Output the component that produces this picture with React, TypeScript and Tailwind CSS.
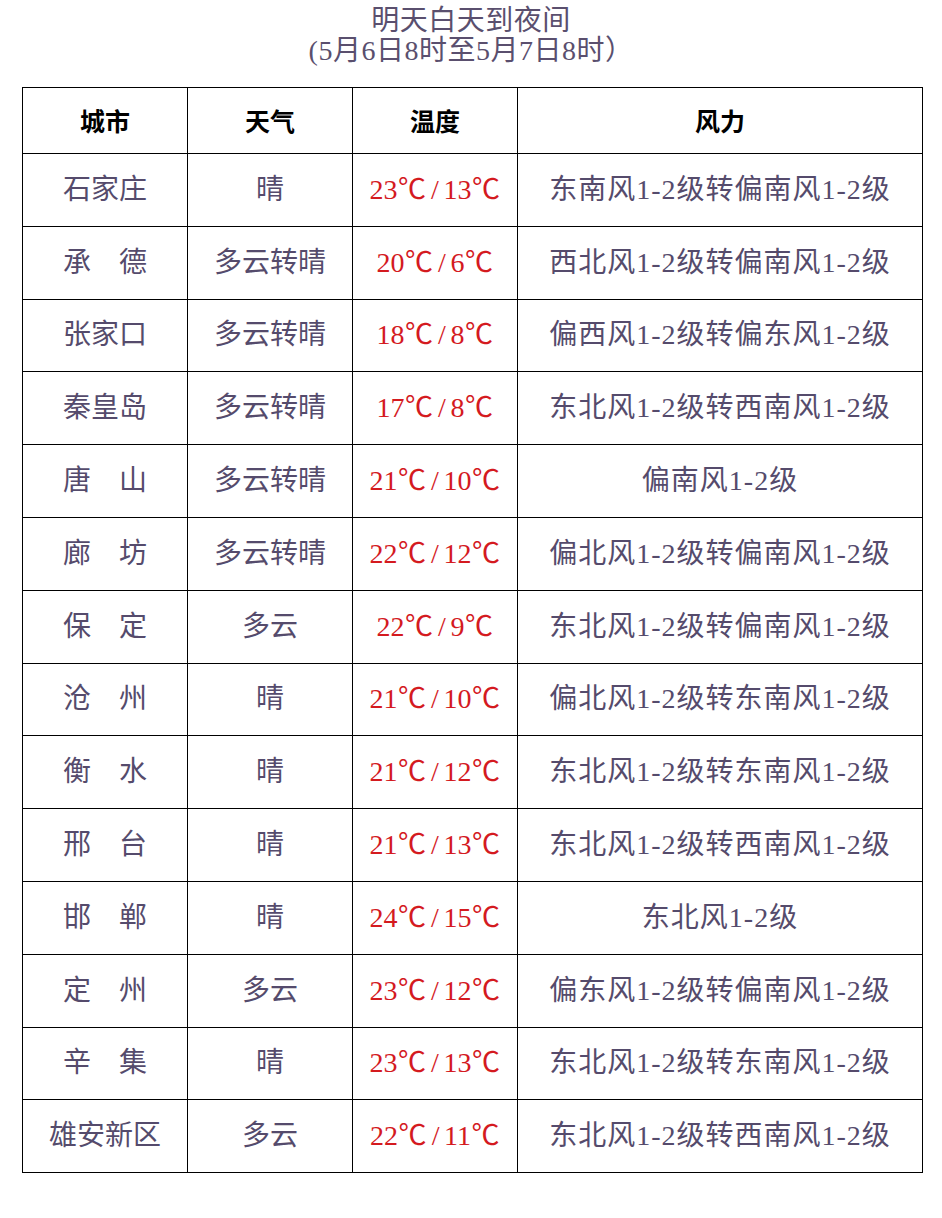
const rows: [string, string, string, string][] = [
  ["石家庄", "晴", "23/13", "东南风1-2级转偏南风1-2级"],
  ["承　德", "多云转晴", "20/6", "西北风1-2级转偏南风1-2级"],
  ["张家口", "多云转晴", "18/8", "偏西风1-2级转偏东风1-2级"],
  ["秦皇岛", "多云转晴", "17/8", "东北风1-2级转西南风1-2级"],
  ["唐　山", "多云转晴", "21/10", "偏南风1-2级"],
  ["廊　坊", "多云转晴", "22/12", "偏北风1-2级转偏南风1-2级"],
  ["保　定", "多云", "22/9", "东北风1-2级转偏南风1-2级"],
  ["沧　州", "晴", "21/10", "偏北风1-2级转东南风1-2级"],
  ["衡　水", "晴", "21/12", "东北风1-2级转东南风1-2级"],
  ["邢　台", "晴", "21/13", "东北风1-2级转西南风1-2级"],
  ["邯　郸", "晴", "24/15", "东北风1-2级"],
  ["定　州", "多云", "23/12", "偏东风1-2级转偏南风1-2级"],
  ["辛　集", "晴", "23/13", "东北风1-2级转东南风1-2级"],
  ["雄安新区", "多云", "22/11", "东北风1-2级转西南风1-2级"],
];

const font = { fontFamily: '"Liberation Serif", "Noto Sans CJK SC", serif' };

function Temp({ value }: { value: string }) {
  const [hi, lo] = value.split("/");
  return (
    <>
      {hi}
      <span className="inline-block w-[29px] text-center">℃</span>
      <span className="inline-block w-[17px] text-center">/</span>
      {lo}
      <span className="inline-block w-[29px] text-center">℃</span>
    </>
  );
}

export default function App() {
  return (
    <div className="w-[942px] h-[1218px] bg-white pt-[6px]" style={font}>
      <div className="text-center text-[28px] leading-[30px] text-[#5a4f6e] tracking-[0.5px]">
        <div>明天白天到夜间</div>
        <div>(5月6日8时至5月7日8时）</div>
      </div>
      <table className="ml-[22px] mt-[21px] w-[901px] table-fixed border-collapse">
        <colgroup>
          <col className="w-[165px]" />
          <col className="w-[165px]" />
          <col className="w-[165px]" />
          <col />
        </colgroup>
        <thead>
          <tr className="h-[66px]">
            {["城市", "天气", "温度", "风力"].map((h) => (
              <th
                key={h}
                className="border border-black text-center text-[25px] font-bold text-black pt-[4px]"
              >
                {h}
              </th>
            ))}
          </tr>
        </thead>
        <tbody>
          {rows.map(([city, weather, temp, wind]) => (
            <tr key={city} className="h-[72.8px]">
              <td className="border border-black text-center text-[28px] text-[#554b6c]">
                {city}
              </td>
              <td className="border border-black text-center text-[28px] text-[#554b6c]">
                {weather}
              </td>
              <td className="border border-black text-center text-[28px] text-[#d41a1f] whitespace-nowrap">
                <Temp value={temp} />
              </td>
              <td className="border border-black text-center text-[28px] text-[#554b6c] whitespace-nowrap tracking-[1px]">
                {wind}
              </td>
            </tr>
          ))}
        </tbody>
      </table>
    </div>
  );
}
